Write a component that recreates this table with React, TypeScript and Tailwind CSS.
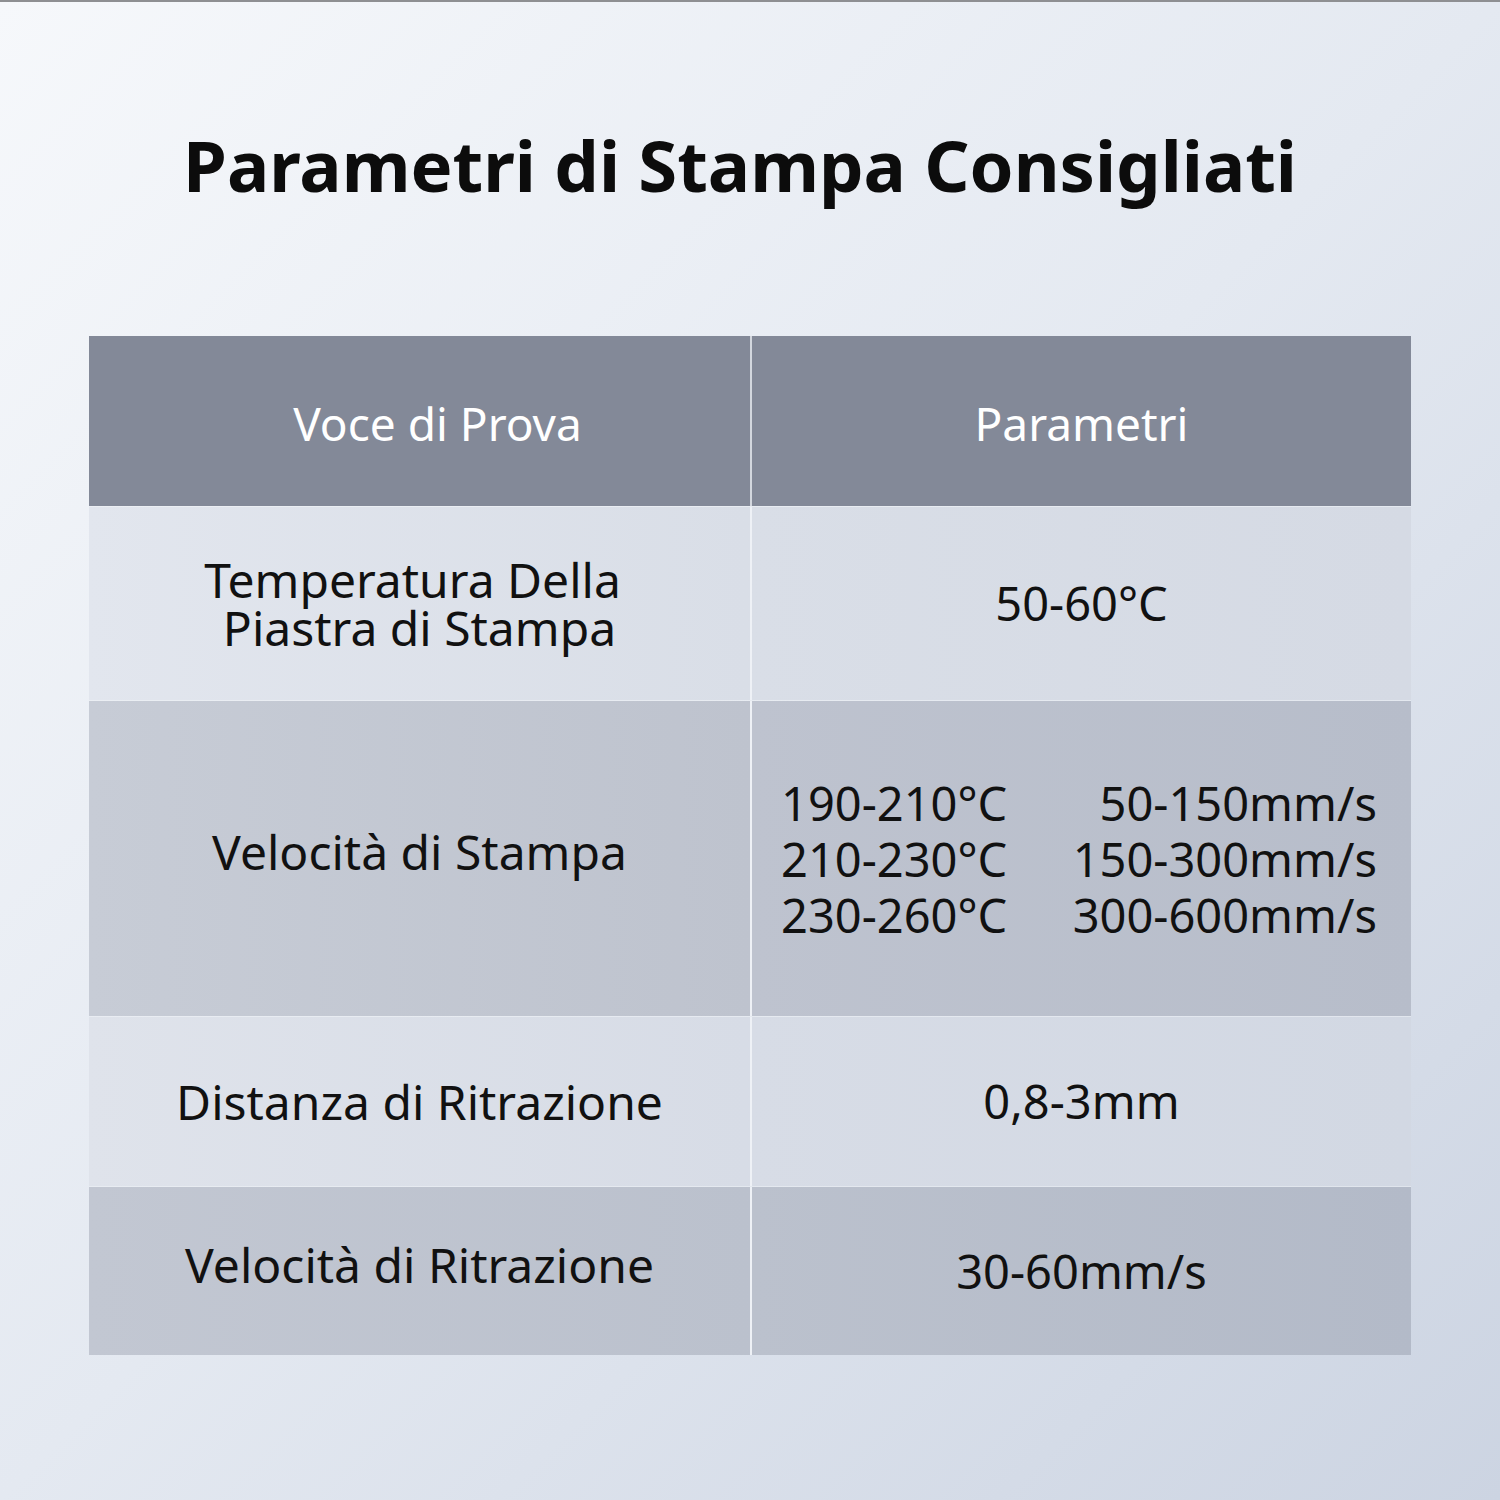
import React from 'react';

const font = { fontFamily: '"Noto Sans", "Open Sans", sans-serif' };

const rows = [
  {
    left: ['Temperatura Della', 'Piastra di Stampa'],
    right: '50-60°C',
    height: 'h-[194px]',
    leftPad: 'pb-[0px]',
    leftBg: 'bg-gradient-to-r from-[#e2e6ee] to-[#d9dee7]',
    rightBg: 'bg-gradient-to-r from-[#d9dee7] to-[#d5dae4]',
  },
  {
    left: ['Velocità di Stampa'],
    right: null,
    height: 'h-[316px]',
    leftPad: 'pb-[14px]',
    leftBg: 'bg-gradient-to-r from-[#c7ccd6] to-[#bec3ce]',
    rightBg: 'bg-gradient-to-r from-[#bec3cf] to-[#b7bdca]',
  },
  {
    left: ['Distanza di Ritrazione'],
    right: '0,8-3mm',
    height: 'h-[170px]',
    leftPad: 'pb-[0px]',
    leftBg: 'bg-gradient-to-r from-[#dfe3eb] to-[#d7dce6]',
    rightBg: 'bg-gradient-to-r from-[#d7dce6] to-[#d2d8e3]',
  },
  {
    left: ['Velocità di Ritrazione'],
    right: '30-60mm/s',
    height: 'h-[169px]',
    leftPad: 'pb-[12px]',
    leftBg: 'bg-gradient-to-r from-[#c2c7d2] to-[#bbc1cd]',
    rightBg: 'bg-gradient-to-r from-[#bbc1cd] to-[#b3bac8]',
  },
];

const speeds = [
  ['190-210°C', '50-150mm/s'],
  ['210-230°C', '150-300mm/s'],
  ['230-260°C', '300-600mm/s'],
];

export default function App() {
  return (
    <div
      className="w-[1500px] h-[1500px] border-t-2 border-[#8e8f92] bg-gradient-to-br from-[#f6f8fb] via-[#e4e9f1] to-[#ccd4e2] flex flex-col items-center"
      style={font}
    >
      <h1 className="mt-[128px] pr-[20px] text-[70.6px] leading-[70px] font-bold text-[#0c0c0c]">
        Parametri di Stampa Consigliati
      </h1>

      <div className="mt-[136px] w-[1322px] flex flex-col">
        <div className="flex h-[170px] bg-[#838998] text-white text-[46px]">
          <div className="w-[663px] border-r-2 border-[#d3d7de] flex items-center justify-center pl-[36px] pt-[4px]">
            Voce di Prova
          </div>
          <div className="flex-1 flex items-center justify-center pt-[4px]">Parametri</div>
        </div>

        {rows.map((row, i) => (
          <div key={i} className={`flex ${row.height} border-t border-[#e9ecf2]/60 text-[#111]`}>
            <div
              className={`w-[663px] border-r-2 border-[#eef1f6] flex flex-col items-center justify-center text-[48px] leading-[48px] whitespace-nowrap ${row.leftPad} ${row.leftBg}`}
            >
              {row.left.map((l, j) => (
                <span key={l} className={row.left.length > 1 && j === 0 ? 'pr-[14px]' : ''}>
                  {l}
                </span>
              ))}
            </div>
            <div className={`flex-1 flex items-center justify-center text-[47px] ${row.rightBg}`}>
              {row.right ? (
                <span>{row.right}</span>
              ) : (
                <div className="w-full pl-[29px] pr-[34px] flex flex-col leading-[56px] whitespace-nowrap">
                  {speeds.map(([t, s]) => (
                    <div key={t} className="flex justify-between">
                      <span>{t}</span>
                      <span>{s}</span>
                    </div>
                  ))}
                </div>
              )}
            </div>
          </div>
        ))}
      </div>
    </div>
  );
}
